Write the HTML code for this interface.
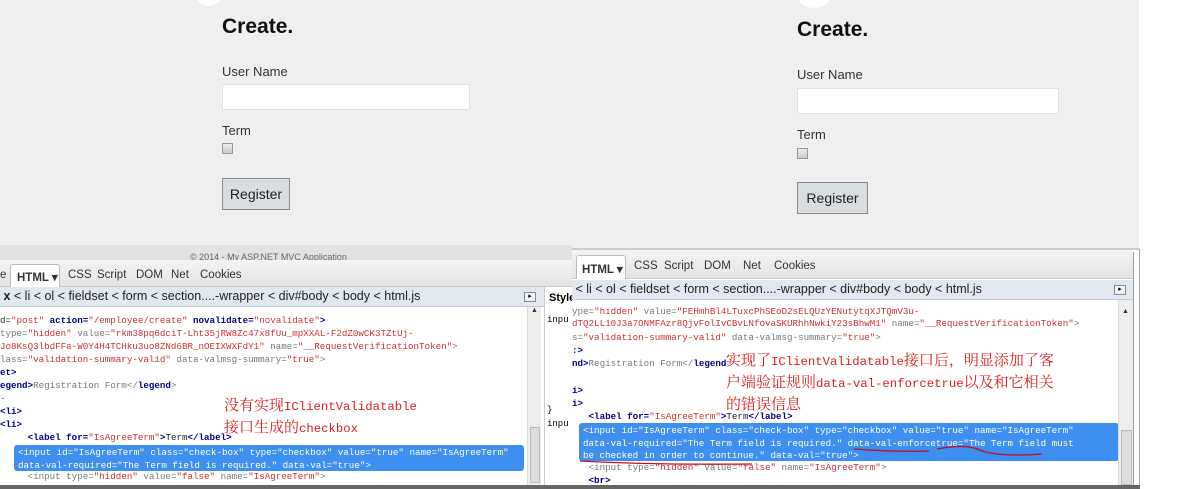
<!DOCTYPE html>
<html><head><meta charset="utf-8"><style>
*{margin:0;padding:0;box-sizing:border-box}
body{width:1179px;height:489px;position:relative;overflow:hidden;background:#fff;font-family:"Liberation Sans",sans-serif}
.a{position:absolute}
.page{background:#efefef}
.h{font-weight:bold;font-size:21px;color:#111}
.lb{font-size:13px;color:#333}
.inp{background:#fff;border:1px solid #e2e2e2}
.cb{width:11px;height:11px;border:1px solid #999;background:linear-gradient(#eee,#ccc)}
.btn{background:#d8dde0;border:1px solid #8a8a8a;font-size:14px;color:#222;text-align:center}
.tb{background:linear-gradient(#f4f4f4,#e4e4e4);border-bottom:1px solid #c8c8c8;font-size:11.5px;color:#333}
.tb span{position:absolute;top:0}
.tab{background:#fff;border:1px solid #bbb;border-bottom:none;font-weight:bold;border-radius:3px 3px 0 0}
.bc{background:#e2e8f0;border-bottom:1px solid #c4ccd6;font-size:12.5px;color:#222;white-space:nowrap;overflow:hidden}
.code{background:#fff;font-family:"Liberation Mono",monospace;font-size:9.2px;white-space:pre;overflow:hidden;color:#333}
.code div{position:absolute;left:0;height:13px;line-height:13px}
.t{color:#000088;font-weight:bold}.v{color:#cc3333}.g{color:#777}.n{color:#222}
.hl{background:#3d8ff0;border-radius:3px;color:#fff;font-family:"Liberation Mono",monospace;font-size:9.2px;white-space:pre;line-height:12.5px;padding:2px 4px}
.red{color:#e02020;font-family:"Noto Serif CJK SC",serif;font-size:15px;line-height:20px;white-space:nowrap}
.red i{font-style:normal;font-family:"Liberation Mono",monospace;font-size:12.3px}
.sb{background:#eee;border-left:1px solid #ddd}
</style></head><body>
<!-- LEFT page -->
<div class="a page" style="left:0;top:0;width:572px;height:245px"></div>
<div class="a" style="left:195px;top:-22px;width:28px;height:28px;border-radius:50%;background:#fff"></div>
<div class="a h" style="left:222px;top:15px">Create.</div>
<div class="a lb" style="left:222px;top:64px">User Name</div>
<div class="a inp" style="left:222px;top:84px;width:248px;height:26px"></div>
<div class="a lb" style="left:222px;top:123px">Term</div>
<div class="a cb" style="left:222px;top:143px"></div>
<div class="a btn" style="left:222px;top:178px;width:68px;height:32px;line-height:30px">Register</div>
<div class="a" style="left:0;top:245px;width:572px;height:17px;background:#e2e2e2;font-size:9px;color:#666;padding-left:190px;line-height:24px;overflow:hidden">© 2014 - My ASP.NET MVC Application</div>
<div class="a tb" style="left:0;top:260px;width:572px;height:27px">
<span style="left:0;top:9px">e</span>
<span class="tab" style="left:10px;top:4px;height:23px;width:50px;padding:5px 0 0 6px">HTML ▾</span>
<span style="left:68px;top:9px">CSS</span><span style="left:97px;top:9px">Script</span><span style="left:136px;top:9px">DOM</span><span style="left:171px;top:9px">Net</span><span style="left:200px;top:9px">Cookies</span></div>
<div class="a bc" style="left:0;top:287px;width:546px;height:20px;line-height:19px">&nbsp;<b>x</b> &lt; li &lt; ol &lt; fieldset &lt; form &lt; section....-wrapper &lt; div#body &lt; body &lt; html.js</div>
<div class="a" style="left:524px;top:292px;width:12px;height:10px;border:1px solid #889;background:#f4f4f4;font-size:7px;text-align:center;line-height:8px">▸</div>
<div class="a code" style="left:0;top:307px;width:527px;height:178px">
<div style="top:7px">d=<span class="v">"post"</span> <span class="t">action=</span><span class="v">"/employee/create"</span> <span class="t">novalidate=</span><span class="v">"novalidate"</span><span class="t">&gt;</span></div>
<div style="top:20px"><span class="g">type=</span><span class="v">"hidden"</span><span class="g"> value=</span><span class="v">"rkm38pq6dciT-Lht35jRW8Zc47x8fUu_mpXXAL-F2dZ0wCK3TZtUj-</span></div>
<div style="top:33px"><span class="v">Jo8KsQ3lbdFFa-W0Y4H4TCHku3uo8ZNd6BR_nOEIXWXFdY1"</span><span class="g"> name=</span><span class="v">"__RequestVerificationToken"</span><span class="g">&gt;</span></div>
<div style="top:46px"><span class="g">lass=</span><span class="v">"validation-summary-valid"</span><span class="g"> data-valmsg-summary=</span><span class="v">"true"</span><span class="g">&gt;</span></div>
<div style="top:59px"><span class="t">et&gt;</span></div>
<div style="top:72px"><span class="t">egend&gt;</span><span class="g">Registration Form&lt;/</span><span class="t">legend</span><span class="g">&gt;</span></div>
<div style="top:85px"><span class="g">-</span></div>
<div style="top:98px"><span class="t">&lt;li&gt;</span></div>
<div style="top:111px"><span class="t">&lt;li&gt;</span></div>
<div style="top:124px">     <span class="t">&lt;label for=</span><span class="v">"IsAgreeTerm"</span><span class="t">&gt;</span><span class="n">Term</span><span class="t">&lt;/label&gt;</span></div>
<div style="top:163px">     <span class="g">&lt;input type=</span><span class="v">"hidden"</span><span class="g"> value=</span><span class="v">"false"</span><span class="g"> name=</span><span class="v">"IsAgreeTerm"</span><span class="g">&gt;</span></div>
</div>
<div class="a hl" style="left:14px;top:445px;width:510px;height:26px">&lt;input id="IsAgreeTerm" class="check-box" type="checkbox" value="true" name="IsAgreeTerm"
data-val-required="The Term field is required." data-val="true"&gt;</div>
<div class="a sb" style="left:527px;top:307px;width:14px;height:178px"><div style="position:absolute;left:2px;top:120px;width:10px;height:56px;background:#ddd;border:1px solid #bbb"></div><div style="position:absolute;left:3px;top:0;font-size:7px;color:#333">▲</div></div>
<div class="a" style="left:544px;top:287px;width:28px;height:198px;background:#fff;border-left:1px solid #ccc;font-size:11px;font-weight:bold;overflow:hidden"><div style="position:absolute;top:5px;left:4px">Style</div><div style="position:absolute;top:28px;left:2px;font:9px 'Liberation Mono',monospace">inpu</div><div style="position:absolute;top:118px;left:2px;font:9px 'Liberation Mono',monospace">}</div><div style="position:absolute;top:132px;left:2px;font:9px 'Liberation Mono',monospace">inpu</div></div>
<div class="a red" style="left:224px;top:395px">没有实现<i>IClientValidatable</i><br>接口生成的<i>checkbox</i></div>
<div class="a" style="left:0;top:485px;width:572px;height:4px;background:#666"></div>

<!-- RIGHT page -->
<div class="a page" style="left:572px;top:0;width:567px;height:249px"></div>
<div class="a" style="left:796px;top:-24px;width:36px;height:32px;border-radius:50%;background:#fff"></div>
<div class="a h" style="left:797px;top:18px">Create.</div>
<div class="a lb" style="left:797px;top:67px">User Name</div>
<div class="a inp" style="left:797px;top:88px;width:262px;height:26px"></div>
<div class="a lb" style="left:797px;top:127px">Term</div>
<div class="a cb" style="left:797px;top:148px"></div>
<div class="a btn" style="left:797px;top:182px;width:71px;height:32px;line-height:30px">Register</div>
<div class="a" style="left:572px;top:248px;width:567px;height:2px;background:#ccc"></div>
<div class="a tb" style="left:572px;top:250px;width:562px;height:29px">
<span class="tab" style="left:4px;top:5px;height:24px;width:50px;padding:6px 0 0 5px">HTML ▾</span>
<span style="left:62px;top:10px">CSS</span><span style="left:92px;top:10px">Script</span><span style="left:132px;top:10px">DOM</span><span style="left:171px;top:10px">Net</span><span style="left:202px;top:10px">Cookies</span></div>
<div class="a bc" style="left:572px;top:280px;width:561px;height:20px;line-height:19px">&nbsp;&lt; li &lt; ol &lt; fieldset &lt; form &lt; section....-wrapper &lt; div#body &lt; body &lt; html.js</div>
<div class="a" style="left:1114px;top:285px;width:12px;height:10px;border:1px solid #889;background:#f4f4f4;font-size:7px;text-align:center;line-height:8px">▸</div>
<div class="a code" style="left:572px;top:300px;width:546px;height:185px">
<div style="top:5px"><span class="g">ype=</span><span class="v">"hidden"</span><span class="g"> value=</span><span class="v">"FEHmhBl4LTuxcPhSEoD2sELQUzYENutytqXJTQmV3u-</span></div>
<div style="top:17px"><span class="v">dTQ2LL10J3a7ONMFAzr8QjvFolIvCBvLNfovaSKURhhNwkiY23sBhwM1"</span><span class="g"> name=</span><span class="v">"__RequestVerificationToken"</span><span class="g">&gt;</span></div>
<div style="top:31px"><span class="g">s=</span><span class="v">"validation-summary-valid"</span><span class="g"> data-valmsg-summary=</span><span class="v">"true"</span><span class="g">&gt;</span></div>
<div style="top:44px"><span class="t">:&gt;</span></div>
<div style="top:57px"><span class="t">nd&gt;</span><span class="g">Registration Form&lt;/</span><span class="t">legend</span><span class="g">&gt;</span></div>
<div style="top:84px"><span class="t">i&gt;</span></div>
<div style="top:97px"><span class="t">i&gt;</span></div>
<div style="top:110px">   <span class="t">&lt;label for=</span><span class="v">"IsAgreeTerm"</span><span class="t">&gt;</span><span class="n">Term</span><span class="t">&lt;/label&gt;</span></div>
<div style="top:161px">   <span class="g">&lt;input type=</span><span class="v">"hidden"</span><span class="g"> value=</span><span class="v">"false"</span><span class="g"> name=</span><span class="v">"IsAgreeTerm"</span><span class="g">&gt;</span></div>
<div style="top:174px">   <span class="t">&lt;br&gt;</span></div>
</div>
<div class="a hl" style="left:579px;top:423px;width:540px;height:38px">&lt;input id="IsAgreeTerm" class="check-box" type="checkbox" value="true" name="IsAgreeTerm"
data-val-required="The Term field is required." data-val-enforcetrue="The Term field must
be checked in order to continue." data-val="true"&gt;</div>
<svg class="a" style="left:572px;top:440px" width="560" height="30"><g fill="none" stroke="#c0102a" stroke-width="1.3"><path d="M282 9 Q320 12 357 11"/><path d="M365 9 Q395 3 410 11 Q430 17 470 14"/><path d="M8 21 Q80 25 180 24"/></g></svg>
<div class="a sb" style="left:1118px;top:300px;width:15px;height:185px"><div style="position:absolute;left:2px;top:130px;width:11px;height:55px;background:#ddd;border:1px solid #bbb"></div><div style="position:absolute;left:3px;top:8px;font-size:7px;color:#333">▲</div></div>
<div class="a" style="left:1133px;top:252px;width:6px;height:233px;background:#fff;border-left:1px solid #999"></div>
<div class="a" style="left:1139px;top:249px;width:1px;height:240px;background:#aaa"></div>
<div class="a red" style="left:726px;top:350px">实现了<i>IClientValidatable</i>接口后，明显添加了客<br>户端验证规则<i>data-val-enforcetrue</i>以及和它相关<br>的错误信息</div>
<div class="a" style="left:545px;top:485px;width:595px;height:4px;background:#666"></div>
</body></html>
